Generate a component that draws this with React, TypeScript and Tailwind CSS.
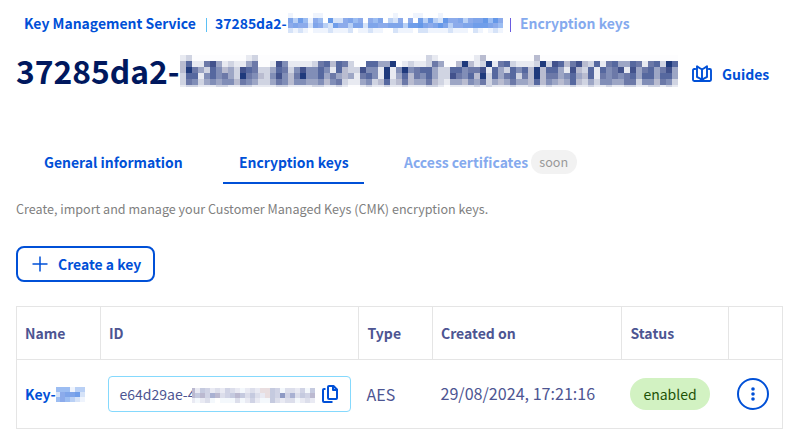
import React from "react";

const NAVY: Record<string, string> = {
  "0": "bg-[#fdfdfe]", "1": "bg-[#e8eaf1]", "2": "bg-[#d0d4e2]", "3": "bg-[#b9bcd0]", "4": "bg-[#9da6c5]",
  "5": "bg-[#818eb7]", "6": "bg-[#6c79a8]", "7": "bg-[#56689f]", "8": "bg-[#42528c]", "9": "bg-[#1f3a7c]",
};
const BLUE: Record<string, string> = {
  "0": "bg-white", "1": "bg-[#eff4fd]", "2": "bg-[#d6e3f8]", "3": "bg-[#b9d0f5]", "4": "bg-[#9cbdf2]",
  "5": "bg-[#8cabeb]", "6": "bg-[#7fa5ea]", "7": "bg-[#709eea]", "8": "bg-[#6598e8]", "9": "bg-[#4f82e3]",
};
const GREY: Record<string, string> = {
  "0": "bg-white", "1": "bg-[#f4f8fc]", "2": "bg-[#e9eaf3]", "3": "bg-[#dcdeeb]", "4": "bg-[#d0d3e5]",
  "5": "bg-[#c5cadf]", "6": "bg-[#bbb9d0]", "7": "bg-[#a9b1d2]", "8": "bg-[#8e9ac4]", "9": "bg-[#e9dee0]",
};

const TITLE = [
  "12000000000" + "12000000000000000000000000000" + "0210000001300000000" + "300000000000000000000000",
  "3711684121" + "1460018511" + "1126737620" + "0774490121" + "1264003931" + "2916721112" + "9287368327" + "1674476167" + "297",
  "3964275342" + "8762247625" + "8557517322" + "8551915956" + "7742277566" + "8174275739" + "3774183271" + "7568184674" + "684",
  "2771575642" + "9653258536" + "9557464341" + "6751914736" + "5742286573" + "9274672639" + "3664574371" + "6565674774" + "774",
  "2652454553" + "6542246535" + "5445356211" + "4523723634" + "4632144354" + "6243464437" + "3543473242" + "5544662553" + "652",
  "1221112211" + "2211112211" + "1122112100" + "1211211211" + "1221011112" + "1211121122" + "1211121121" + "1211221122" + "121",
];
const CRUMB = [
  "1000011000000000000001000110001000000000000",
  "6374154082256450546032505073732855635668485",
  "5655265327553662665566637786568635566777654",
  "2121011121112011211002111022111121110210121",
];
const KEY = ["3444133", "9256672", "2454321"];
const ID = ["6254232432123299541332415", "6564763456535329548473546", "2123101113124211532331232"];

function Mosaic({ rows, palette, cell, className }: {
  rows: string[]; palette: Record<string, string>; cell: string; className?: string;
}) {
  return (
    <div aria-hidden className={"relative flex flex-col items-end overflow-hidden shrink-0 " + (className ?? "")}>
      {rows.map((row, y) => (
        <div key={y} className="flex shrink-0">
          {row.split("").map((c, x) => <div key={x} className={`${cell} shrink-0 ${palette[c]}`} />)}
        </div>
      ))}
    </div>
  );
}

function Tabs() {
  return (
    <nav className="mt-[41px] flex h-[56px] whitespace-nowrap pl-7 text-[13.95px] font-bold leading-[24px] text-[#0050d7]">
      <div className="w-[167px] px-4 pt-[22px]">General information</div>
      <div className="ml-7 w-[141px] border-b-2 border-[#0050d7] px-4 pt-[22px]">Encryption keys</div>
      <div className="ml-10 flex pt-[22px] text-[#85aaee]">
        <span className="w-[126.5px]">Access certificates</span>
        <span className="flex h-6 w-[46.5px] items-center justify-center rounded-full bg-[#f2f2f2] text-[12.6px] font-normal text-[#999]">soon</span>
      </div>
    </nav>
  );
}

export default function App() {
  return (
    <main className="h-[442px] w-[800px] overflow-hidden bg-white font-['Noto_Sans_CJK_SC','Noto_Sans',sans-serif] text-[#4d5592]">
      <header className="flex h-[34px] items-start whitespace-nowrap pl-6 text-[13.95px] font-bold leading-6 text-[#0050d7]">
        <span className="mt-[11px] w-[182px]">Key Management Service</span>
        <span className="mt-[18px] h-[14px] w-px bg-[#5bc0f5]" />
        <span className="ml-2 mt-[11px] w-[73px]">37285da2-</span>
        <Mosaic rows={CRUMB} palette={BLUE} cell="size-[5px]" className="mt-[13px]" />
        <span className="ml-[7px] mt-[18px] h-[14px] w-px bg-[#6a5be0]" />
        <span className="ml-[9px] mt-[11px] text-[#85aaee]">Encryption keys</span>
      </header>

      <div className="flex h-[53px] whitespace-nowrap pl-4">
        <h1 className="mt-[16px] w-[164px] text-[31.8px] font-bold leading-10 text-[#00185e]">37285da2-</h1>
        <Mosaic rows={TITLE} palette={NAVY} cell="size-[6px]" className="mt-[21px] h-8" />
        <a className="ml-[14px] mt-[28px] flex h-6 items-center text-[14px] font-bold text-[#0050d7]">
          <svg width="20" height="18" viewBox="0 0 20 18" fill="none" stroke="currentColor" strokeWidth="1.9" strokeLinecap="round" strokeLinejoin="round">
            <path d="M3.2 4H2.2Q1 4 1 5.2V14.8Q1 16 2.2 16H17.8Q19 16 19 14.8V5.2Q19 4 17.8 4H16.8M10 4.3Q8.5 3.8 5 1.2V12Q8.5 13.2 10 15.6Q11.5 13.2 15 12V1.2Q11.5 3.8 10 4.3V15" />
          </svg>
          <span className="ml-2.5 mt-px">Guides</span>
        </a>
      </div>

      <Tabs />
      <p className="ml-4 mt-[15px] whitespace-nowrap text-[12.57px] leading-5 text-[#808080]">Create, import and manage your Customer Managed Keys (CMK) encryption keys.</p>
      <button className="ml-4 mt-[27px] flex h-9 w-[139px] items-center whitespace-nowrap rounded-lg border-2 border-[#0050d7] pl-[14px] text-[13.95px] font-bold text-[#0050d7]">
        <svg width="16" height="16" viewBox="0 0 16 16" stroke="currentColor" strokeWidth="1.5"><path d="M8 .5V15.5M.5 8H15.5" /></svg>
        <span className="ml-2.5">Create a key</span>
      </button>

      <section className="ml-4 mt-6 w-[767px] whitespace-nowrap border border-[#e5e5e5] text-[14px]">
        <div className="grid h-[53px] grid-cols-[84px_258px_74px_189px_107px_53px] border-b border-[#e5e5e5] font-bold leading-[53px]">
          <div className="border-r border-[#e5e5e5] pl-2">Name</div>
          <div className="border-r border-[#e5e5e5] pl-2">ID</div>
          <div className="border-r border-[#e5e5e5] pl-[8.5px]">Type</div>
          <div className="border-r border-[#e5e5e5] pl-2">Created on</div>
          <div className="border-r border-[#e5e5e5] pl-[8.5px]">Status</div>
          <div />
        </div>
        <div className="grid h-[68px] grid-cols-[84px_258px_74px_189px_107px_53px] items-center">
          <div className="flex items-center pl-2 font-bold text-[#0050d7]">
            <span className="w-[31px]">Key-</span>
            <Mosaic rows={KEY} palette={BLUE} cell="size-[5px]" className="mt-px w-[30px] pr-px" />
          </div>
          <div className="ml-[7px] flex h-9 w-[243px] items-center rounded border border-[#85d9fd] pl-[10.5px]">
            <span className="w-[72.5px]">e64d29ae-4</span>
            <Mosaic rows={ID} palette={GREY} cell="size-[5px]" className="mt-[3px] w-[123px]" />
            <svg className="ml-[7px]" width="16" height="18" viewBox="0 0 16 18" fill="none" stroke="#0050d7" strokeWidth="2" strokeLinejoin="round">
              <path d="M7 1H11.5L15 4.5V13Q15 14 14 14H7Q6 14 6 13V2Q6 1 7 1ZM11 1V5H15M3.5 4H2Q1 4 1 5V16Q1 17 2 17H10.5" />
            </svg>
          </div>
          <div className="pb-px pl-[7.5px] text-[16px]">AES</div>
          <div className="pb-px pl-[7.5px] text-[16.1px]">29/08/2024, 17:21:16</div>
          <div><span className="ml-2 flex h-8 w-20 items-center justify-center rounded-full bg-[#d2f2c2] text-[#1e5207]">enabled</span></div>
          <button className="ml-2 flex size-8 items-center justify-center rounded-full border-2 border-[#0050d7]">
            <svg width="4" height="14" viewBox="0 0 4 14" fill="#0050d7"><circle cx="2" cy="2" r="1.8" /><circle cx="2" cy="7" r="1.8" /><circle cx="2" cy="12" r="1.8" /></svg>
          </button>
        </div>
      </section>
    </main>
  );
}
